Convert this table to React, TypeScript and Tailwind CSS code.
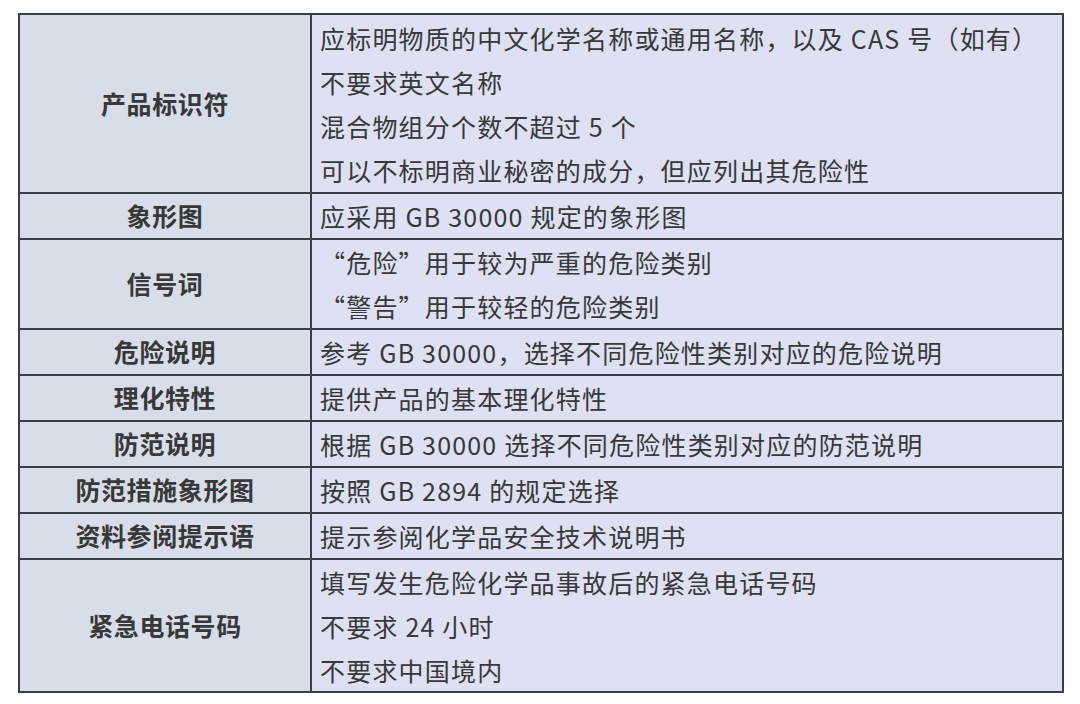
const rows: { label: string; lines: string[]; h: string }[] = [
  {
    label: '产品标识符',
    h: 'h-[177px]',
    lines: [
      '应标明物质的中文化学名称或通用名称，以及 CAS 号（如有）',
      '不要求英文名称',
      '混合物组分个数不超过 5 个',
      '可以不标明商业秘密的成分，但应列出其危险性',
    ],
  },
  { label: '象形图', h: 'h-[46px]', lines: ['应采用 GB 30000 规定的象形图'] },
  { label: '信号词', h: 'h-[90px]', lines: ['“危险”用于较为严重的危险类别', '“警告”用于较轻的危险类别'] },
  { label: '危险说明', h: 'h-[46px]', lines: ['参考 GB 30000，选择不同危险性类别对应的危险说明'] },
  { label: '理化特性', h: 'h-[46px]', lines: ['提供产品的基本理化特性'] },
  { label: '防范说明', h: 'h-[46px]', lines: ['根据 GB 30000 选择不同危险性类别对应的防范说明'] },
  { label: '防范措施象形图', h: 'h-[46px]', lines: ['按照 GB 2894 的规定选择'] },
  { label: '资料参阅提示语', h: 'h-[46px]', lines: ['提示参阅化学品安全技术说明书'] },
  {
    label: '紧急电话号码',
    h: 'h-[133px]',
    lines: ['填写发生危险化学品事故后的紧急电话号码', '不要求 24 小时', '不要求中国境内'],
  },
];

export default function App() {
  return (
    <div
      className="w-[1080px] h-[704px] bg-white pt-[13px] pl-[18px] text-[#383838]"
      style={{ fontFamily: '"Noto Sans CJK SC", "Noto Sans", sans-serif' }}
    >
      <div className="w-[1046px] border-2 border-[#3a3d44] flex flex-col">
        {rows.map((r, i) => (
          <div
            key={r.label}
            className={`flex ${r.h} ${i > 0 ? 'border-t-2 border-[#3a3d44]' : ''}`}
          >
            <div className="w-[292px] shrink-0 bg-[#d8dee9] border-r-2 border-[#3a3d44] flex items-center justify-center text-[25px] font-bold tracking-[0.6px]">
              {r.label}
            </div>
            <div className="flex-1 bg-[#dde1f3] flex flex-col justify-center pl-[8px] text-[25px] leading-[44px] tracking-[1.2px]">
              {r.lines.map((l) => (
                <div key={l}>{l}</div>
              ))}
            </div>
          </div>
        ))}
      </div>
    </div>
  );
}
